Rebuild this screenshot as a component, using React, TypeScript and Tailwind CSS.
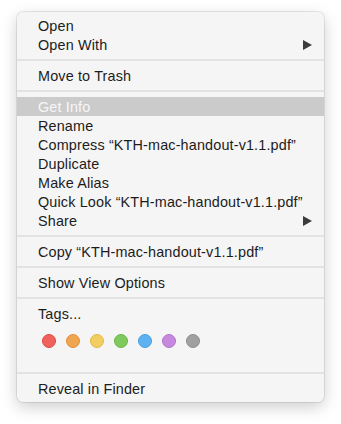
const tagColors = [
  { fill: '#f0625b', ring: '#e0483f' },
  { fill: '#f0a650', ring: '#e3913a' },
  { fill: '#f2cd5f', ring: '#e2ba45' },
  { fill: '#80c95d', ring: '#6bb748' },
  { fill: '#5eb2f2', ring: '#479ee0' },
  { fill: '#c689de', ring: '#b274cc' },
  { fill: '#a0a0a0', ring: '#8e8e8e' },
]

export default function App() {
  return (
    <div
      className="min-h-[424px] bg-white pl-[17px] pt-[12px]"
      style={{ fontFamily: '"Liberation Sans", Arial, sans-serif' }}
    >
      <div className="w-[307px] rounded-[6px] bg-[#f5f5f5] py-[4px] text-[14.4px] tracking-[0.15px] text-[#1c1c1c] shadow-[0_5px_16px_rgba(0,0,0,0.2),0_0_0_1px_rgba(0,0,0,0.08)]">
        <Item label="Open" />
        <Item label="Open With" submenu />
        <Sep />
        <Item label="Move to Trash" />
        <Sep />
        <Item label="Get Info" active />
        <Item label="Rename" />
        <Item label="Compress “KTH-mac-handout-v1.1.pdf”" />
        <Item label="Duplicate" />
        <Item label="Make Alias" />
        <Item label="Quick Look “KTH-mac-handout-v1.1.pdf”" />
        <Item label="Share" submenu />
        <Sep />
        <Item label="Copy “KTH-mac-handout-v1.1.pdf”" />
        <Sep />
        <Item label="Show View Options" />
        <Sep />
        <Item label="Tags..." />
        <div className="flex h-[44px] items-start gap-[10px] pl-[25px] pt-[11px]">
          {tagColors.map((c) => (
            <span
              key={c.fill}
              className="h-[14px] w-[14px] rounded-full border"
              style={{ backgroundColor: c.fill, borderColor: c.ring }}
            />
          ))}
        </div>
        <Sep />
        <Item label="Reveal in Finder" />
      </div>
    </div>
  )
}

function Item({ label, submenu, active }: { label: string; submenu?: boolean; active?: boolean }) {
  return (
    <div
      className={
        'flex h-[19px] items-center justify-between pl-[21px] pr-[12px] leading-none ' +
        (active ? 'bg-[#cbcbcb] text-[#f7f7f7]' : '')
      }
    >
      <span className="pt-[2px]">{label}</span>
      {submenu && (
        <svg width="9" height="10" viewBox="0 0 9 10" className="text-[#3b3b3b]">
          <path d="M0 0 L9 5 L0 10 Z" fill="currentColor" />
        </svg>
      )}
    </div>
  )
}

function Sep() {
  return (
    <div className="flex h-[12px] items-center">
      <div className="h-[2px] w-full bg-[#e3e3e3]" />
    </div>
  )
}
